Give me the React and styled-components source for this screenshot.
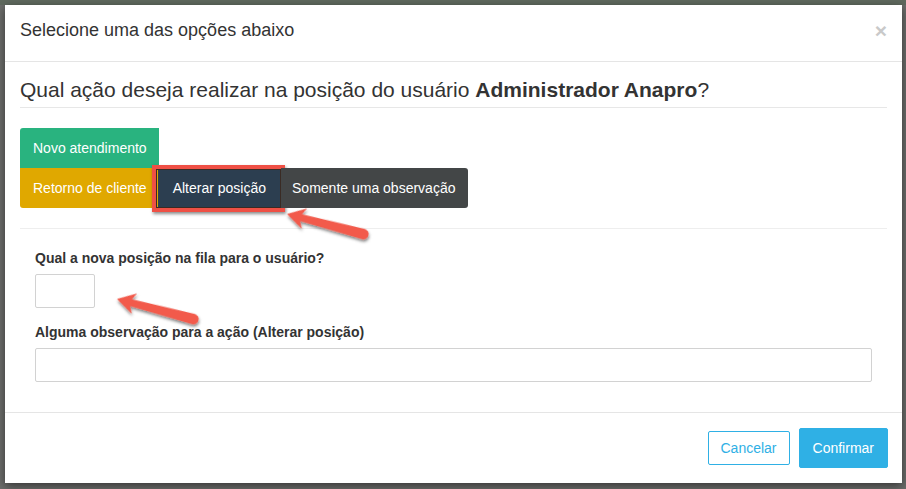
import React from "react";
import styled, { createGlobalStyle } from "styled-components";

const GlobalStyle = createGlobalStyle`
  body {
    margin: 0;
    background: #6c6d6b;
    font-family: "Liberation Sans", Arial, sans-serif;
    color: #333;
  }
`;

const Backdrop = styled.div`
  position: relative;
  width: 906px;
  height: 489px;
  padding: 5px 4px 6px 5px;
  box-sizing: border-box;
  background: linear-gradient(#5f695e 0, #5f695e 5px, #6c6d6b 5px);
  overflow: hidden;
`;

const Modal = styled.div`
  width: 897px;
  height: 478px;
  background: #fff;
  box-shadow: 0 3px 9px rgba(0, 0, 0, 0.5);
  display: flex;
  flex-direction: column;
`;

const Header = styled.div`
  display: flex;
  justify-content: space-between;
  align-items: flex-start;
  padding: 13px 15px 18px;
  border-bottom: 1px solid #e5e5e5;
`;

const Title = styled.h4`
  margin: 0;
  font-size: 18px;
  font-weight: normal;
  line-height: 25px;
  color: #333;
`;

const Close = styled.span`
  font-size: 21px;
  font-weight: bold;
  line-height: 25px;
  color: #c9c9c9;
`;

const Body = styled.div`
  padding: 15px;
  flex: 1;
`;

const Question = styled.h3`
  margin: 0;
  font-size: 21px;
  font-weight: normal;
  line-height: 26px;
  padding-bottom: 4px;
  border-bottom: 1px solid #e7e7e7;
  color: #333;
  b {
    font-weight: bold;
  }
`;

const Options = styled.div`
  margin-top: 20px;
  display: flex;
  flex-direction: column;
`;

const OptionRow = styled.div`
  display: flex;
`;

const OptionButton = styled.button`
  position: relative;
  height: 40px;
  border: none;
  padding: 0 ${(p) => p.$padR}px 0 ${(p) => p.$padL}px;
  font-family: inherit;
  font-size: 14px;
  color: #fff;
  background: ${(p) => p.$bg};
  border-radius: ${(p) => p.$radius || "0"};
  cursor: pointer;
`;

const Highlight = styled.span`
  position: absolute;
  top: -3px;
  bottom: -4px;
  left: -6px;
  right: -4px;
  border: 4px solid #ef5045;
  box-shadow: 1px 2px 3px rgba(0, 0, 0, 0.45), inset 0 0 0 1px #3a2b24;
  pointer-events: none;
`;

const Divider = styled.hr`
  margin: 20px 0 0;
  border: none;
  border-top: 1px solid #eee;
`;

const Field = styled.div`
  padding: 0 15px;
  margin-top: ${(p) => p.$top}px;
`;

const Label = styled.label`
  display: block;
  font-size: 14px;
  font-weight: bold;
  line-height: 18px;
  color: #333;
`;

const Input = styled.input`
  display: block;
  box-sizing: border-box;
  margin-top: 7px;
  width: ${(p) => p.$width || "100%"};
  height: 34px;
  border: 1px solid #d2d2d2;
  border-radius: 2px;
  padding: 6px 10px;
  font-family: inherit;
  font-size: 14px;
  outline: none;
`;

const Footer = styled.div`
  display: flex;
  justify-content: flex-end;
  align-items: center;
  gap: 9px;
  padding: 15px 14px 15px 15px;
  border-top: 1px solid #e5e5e5;
`;

const FooterButton = styled.button`
  font-family: inherit;
  font-size: 14px;
  border-radius: 2px;
  cursor: pointer;
  height: ${(p) => (p.$primary ? 40 : 34)}px;
  padding: 0 ${(p) => (p.$primary ? 13 : 12)}px;
  border: 1px solid #2fb0e5;
  background: ${(p) => (p.$primary ? "#2fb0e5" : "#fff")};
  color: ${(p) => (p.$primary ? "#fff" : "#2fb0e5")};
`;

const Annotations = styled.svg`
  position: absolute;
  left: 0;
  top: 0;
  pointer-events: none;
`;

const Arrow = ({ x, y }) => (
  <path
    transform={`translate(${x} ${y}) rotate(14.7)`}
    d="M0 0 L18 -10.5 L14.5 -3.6 L79 -5.2 A5.2 5.2 0 0 1 79 5.2 L14.5 3.6 L18 10.5 Z"
    fill="#f25a4b"
    filter="url(#shadow)"
  />
);

export default function App() {
  return (
    <>
      <GlobalStyle />
      <Backdrop>
        <Modal>
          <Header>
            <Title>Selecione uma das opções abaixo</Title>
            <Close>×</Close>
          </Header>
          <Body>
            <Question>
              Qual ação deseja realizar na posição do usuário <b>Administrador Anapro</b>?
            </Question>
            <Options>
              <OptionRow>
                <OptionButton $bg="#29b37f" $padL={13} $padR={12} $radius="3px 0 0 0">
                  Novo atendimento
                </OptionButton>
              </OptionRow>
              <OptionRow>
                <OptionButton $bg="#e0a800" $padL={13} $padR={11} $radius="0 0 0 3px">
                  Retorno de cliente
                </OptionButton>
                <OptionButton $bg="#2c3e50" $padL={15} $padR={15}>
                  Alterar posição
                  <Highlight />
                </OptionButton>
                <OptionButton $bg="#434647" $padL={11} $padR={13} $radius="0 3px 3px 0">
                  Somente uma observação
                </OptionButton>
              </OptionRow>
            </Options>
            <Divider />
            <Field $top={20}>
              <Label>Qual a nova posição na fila para o usuário?</Label>
              <Input $width="60px" />
            </Field>
            <Field $top={15}>
              <Label>Alguma observação para a ação (Alterar posição)</Label>
              <Input />
            </Field>
          </Body>
          <Footer>
            <FooterButton>Cancelar</FooterButton>
            <FooterButton $primary>Confirmar</FooterButton>
          </Footer>
        </Modal>
        <Annotations width="906" height="489" viewBox="0 0 906 489">
          <defs>
            <filter id="shadow" x="-20%" y="-50%" width="140%" height="200%">
              <feDropShadow dx="1" dy="2" stdDeviation="1.5" floodColor="#000" floodOpacity="0.5" />
            </filter>
          </defs>
          <Arrow x={287} y={214} />
          <Arrow x={117} y={299} />
        </Annotations>
      </Backdrop>
    </>
  );
}
